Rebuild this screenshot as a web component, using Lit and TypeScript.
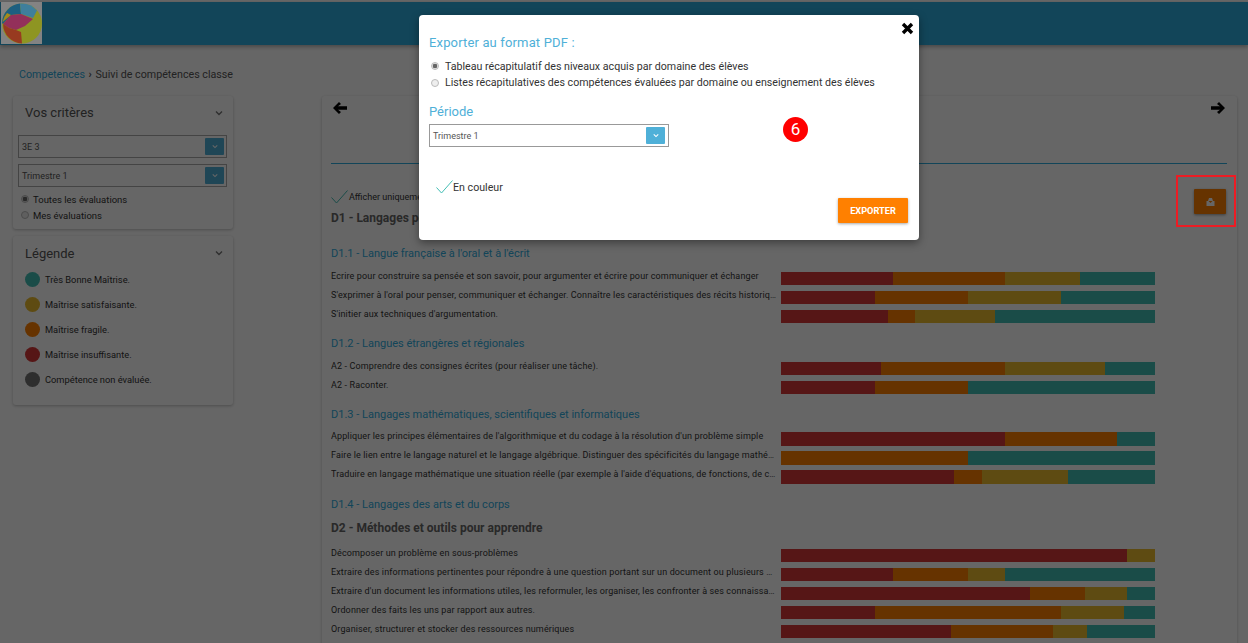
import { html, css, LitElement } from 'lit';
import { customElement } from 'lit/decorators.js';

const COLORS = ['#d73737', '#ff8000', '#ebbc2d', '#43beb4'];

interface Row {
  label: string;
  seg: number[];
}

interface Group {
  title: string;
  rows: Row[];
  tall?: boolean;
  cls: string;
}

const GROUPS: Group[] = [
  {
    title: 'D1.1 - Langue française à l\'oral et à l\'écrit',
    cls: 'g11',
    rows: [
      { label: 'Écrire pour construire sa pensée et son savoir, pour argumenter et écrire pour communiquer et échanger', seg: [112, 112, 75, 75] },
      { label: 'S\'exprimer à l\'oral pour penser, communiquer et échanger. Connaître les caractéristiques des récits historiques et leurs enjeux', seg: [94, 93, 93, 94] },
      { label: 'S\'initier aux techniques d\'argumentation.', seg: [107, 27, 80, 160] },
    ],
  },
  {
    title: 'D1.2 - Langues étrangères et régionales',
    cls: 'g12',
    rows: [
      { label: 'A2 - Comprendre des consignes écrites (pour réaliser une tâche).', seg: [100, 124, 100, 50] },
      { label: 'A2 - Raconter.', seg: [94, 93, 0, 187] },
    ],
  },
  {
    title: 'D1.3 - Langages mathématiques, scientifiques et informatiques',
    cls: 'g13',
    tall: true,
    rows: [
      { label: 'Appliquer les principes élémentaires de l\'algorithmique et du codage à la résolution d\'un problème simple', seg: [224, 112, 0, 38] },
      { label: 'Faire le lien entre le langage naturel et le langage algébrique. Distinguer des spécificités du langage mathématique', seg: [0, 187, 0, 187] },
      { label: 'Traduire en langage mathématique une situation réelle (par exemple à l\'aide d\'équations, de fonctions, de configurations)', seg: [173, 28, 86, 87] },
    ],
  },
  { title: 'D1.4 - Langages des arts et du corps', cls: 'g14', rows: [] },
];

const D2_ROWS: Row[] = [
  { label: 'Décomposer un problème en sous-problèmes', seg: [346, 0, 28, 0] },
  { label: 'Extraire des informations pertinentes pour répondre à une question portant sur un document ou plusieurs documents', seg: [112, 75, 37, 150] },
  { label: 'Extraire d\'un document les informations utiles, les reformuler, les organiser, les confronter à ses connaissances', seg: [249, 55, 42, 28] },
  { label: 'Ordonner des faits les uns par rapport aux autres.', seg: [94, 186, 63, 31] },
  { label: 'Organiser, structurer et stocker des ressources numériques', seg: [170, 102, 34, 68] },
];

const LEGEND = [
  ['Très Bonne Maîtrise.', COLORS[3]],
  ['Maîtrise satisfaisante.', COLORS[2]],
  ['Maîtrise fragile.', COLORS[1]],
  ['Maîtrise insuffisante.', COLORS[0]],
  ['Compétence non évaluée.', '#737373'],
];

const chevron = html`<svg class="chev" width="8" height="6" viewBox="0 0 8 6"><path d="M1 1.5 4 4.5 7 1.5" fill="none" stroke="currentColor" stroke-width="1.4"/></svg>`;
const check = html`<svg class="check" width="17" height="14" viewBox="0 0 17 14"><path d="M0.5 7.5 5.5 13 16.5 0.5" fill="none" stroke="currentColor" stroke-width="1"/></svg>`;

@customElement('app-root')
export class AppRoot extends LitElement {
  static styles = css`
    :host {
      display: block;
      position: relative;
      width: 1248px;
      height: 643px;
      overflow: hidden;
      background: #fff;
      font-family: Roboto, 'Liberation Sans', sans-serif;
      color: #222;
    }

    .header {
      height: 43px;
      margin-top: 2px;
      background: #2facde;
      box-shadow: 0 2px 4px rgba(0, 0, 0, 0.3);
    }

    .logo {
      position: absolute;
      left: 1px;
      top: 2px;
      z-index: 20;
      width: 41px;
      height: 42px;
      display: block;
    }

    .crumb {
      margin: 23px 0 0 19px;
      height: 14px;
      line-height: 14px;
      font-size: 10.7px;
      color: #555;
    }

    .crumb a {
      color: #2facde;
    }

    .crumb b {
      margin: 0 1px;
    }

    .layout {
      display: flex;
      align-items: flex-start;
      margin-top: 14px;
    }

    .side {
      width: 220px;
      margin-left: 13px;
      display: flex;
      flex-direction: column;
      gap: 7px;
    }

    .card {
      background: #fff;
      border-radius: 3px;
      box-shadow: 0 1px 3px rgba(0, 0, 0, 0.25);
    }

    .side-head {
      display: flex;
      justify-content: space-between;
      align-items: center;
      padding: 0 10px 0 12px;
      height: 33px;
      font-size: 13px;
      color: #555;
    }

    .chev {
      color: #777;
    }

    .criteria {
      height: 133px;
    }

    .select {
      display: flex;
      align-items: center;
      justify-content: space-between;
      box-sizing: border-box;
      border: 1px solid #aaa;
      height: 23px;
      font-size: 9px;
      color: #555;
      padding: 0 2px 0 3px;
    }

    .select .btn {
      width: 19px;
      height: 17px;
      background: #4fb0d8;
      border-radius: 1px;
      display: flex;
      align-items: center;
      justify-content: center;
    }

    .select .chev {
      color: #fff;
      width: 6px;
      height: 5px;
    }

    .criteria .select {
      margin: 6px 6px 6px 5px;
    }

    .criteria .select + .select {
      margin-top: 0;
      margin-bottom: 4px;
    }

    .radio {
      display: flex;
      align-items: center;
      gap: 4px;
      font-size: 9.5px;
      height: 16px;
      color: #333;
      margin-left: 8px;
    }

    .dot {
      width: 8px;
      height: 8px;
      border: 1px solid #bbb;
      border-radius: 50%;
      box-sizing: border-box;
      background: #eee;
      flex: none;
    }

    .dot.on {
      background: radial-gradient(circle, #666 0 2px, #e4e4e4 2.6px);
    }

    .legend {
      height: 169px;
    }

    .legend .side-head {
      box-sizing: border-box;
      height: 36px;
      padding-bottom: 2px;
    }

    .leg-row {
      display: flex;
      align-items: center;
      gap: 5px;
      height: 15px;
      margin: 0 0 10px 12px;
      font-size: 9.3px;
      color: #333;
    }

    .leg-row i {
      width: 15px;
      height: 15px;
      border-radius: 50%;
    }

    .main {
      position: relative;
      margin-left: 89px;
      width: 915px;
      height: 560px;
      box-sizing: border-box;
      padding-left: 9px;
    }

    .nav {
      display: flex;
      justify-content: space-between;
      padding: 6px 2px 0 2px;
      height: 68px;
      box-sizing: border-box;
      border-bottom: 1px solid #2facde;
      width: 896px;
    }

    .only {
      display: flex;
      align-items: center;
      gap: 1px;
      margin-top: 26px;
      height: 14px;
      font-size: 9px;
      color: #333;
      white-space: nowrap;
    }

    .only .check,
    .modal .check {
      color: #43beb4;
    }

    h2 {
      margin: 6px 0 0;
      font-size: 12px;
      line-height: 16px;
      height: 16px;
      font-weight: 700;
      color: #666;
      white-space: nowrap;
    }

    h3 {
      margin: 0;
      font-size: 11px;
      line-height: 14px;
      font-weight: 400;
      color: #2facde;
      white-space: nowrap;
    }

    .group h3 + .rows {
      margin-top: 11px;
    }

    .g11 { margin-top: 21px; }
    .g12 { margin-top: 14px; }
    .g13 { margin-top: 14px; }
    .g14 { margin-top: 14px; }

    .g13 h3 + .rows {
      margin-top: 10px;
    }

    .d2 {
      margin-top: 8px;
    }

    .d2 + .rows {
      margin-top: 13px;
    }

    .row {
      display: flex;
      height: 13px;
      margin-bottom: 6px;
      width: 824px;
    }

    .tall .row {
      height: 14px;
      margin-bottom: 5px;
    }

    .label {
      width: 450px;
      flex: none;
      font-size: 9px;
      line-height: 9px;
      color: #333;
      white-space: nowrap;
      overflow: hidden;
      text-overflow: ellipsis;
      box-sizing: border-box;
      padding-right: 4px;
      letter-spacing: 0.13px;
    }

    .bar {
      flex: 1;
      display: flex;
    }

    .export {
      position: absolute;
      right: 11px;
      top: 93px;
      width: 32px;
      height: 25px;
      background: #ff8000;
      border-radius: 1px;
      box-shadow: 0 1px 3px rgba(0, 0, 0, 0.4);
      display: flex;
      align-items: center;
      justify-content: center;
    }

    .overlay {
      position: absolute;
      inset: 0;
      z-index: 10;
      background: rgba(0, 0, 0, 0.6);
    }

    .logo-bg {
      fill: #838383;
    }

    .modal {
      position: absolute;
      z-index: 11;
      left: 419px;
      top: 15px;
      width: 500px;
      height: 225px;
      box-sizing: border-box;
      padding: 20px 10px 0;
      background: #fff;
      border-radius: 4px;
      box-shadow: 0 3px 8px rgba(0, 0, 0, 0.4);
    }

    .close {
      position: absolute;
      right: 5px;
      top: 7px;
    }

    .modal h4 {
      margin: 0;
      font-size: 13px;
      line-height: 16px;
      font-weight: 400;
      color: #4fb0d8;
      letter-spacing: 0.15px;
    }

    .modal .radios {
      margin-top: 7px;
    }

    .modal .radio {
      font-size: 10.65px;
      height: 16.5px;
      gap: 6px;
      margin-left: 2px;
      color: #333;
    }

    .modal .period {
      margin-top: 13px;
      font-size: 13px;
      line-height: 16px;
      color: #4fb0d8;
    }

    .modal .select {
      width: 240px;
      margin-top: 4px;
      border-color: #999;
      padding: 0 3px 0 3px;
    }

    .color {
      display: flex;
      align-items: center;
      gap: 0;
      margin: 32px 0 0 7px;
      font-size: 10.65px;
      color: #333;
      height: 16px;
    }

    .go {
      position: absolute;
      right: 11px;
      bottom: 17px;
      width: 70px;
      height: 25px;
      display: flex;
      align-items: center;
      justify-content: center;
      background: #ff8000;
      color: #fff;
      font-size: 9.2px;
      font-weight: 700;
      border-radius: 1px;
      box-shadow: 0 1px 3px rgba(0, 0, 0, 0.35);
    }

    .step {
      position: absolute;
      left: 364px;
      top: 102px;
      width: 25px;
      height: 25px;
      border-radius: 50%;
      background: #f00;
      color: #fff;
      font-size: 17px;
      line-height: 25px;
      text-align: center;
    }

    .mark {
      position: absolute;
      z-index: 12;
      left: 1176px;
      top: 175px;
      width: 60px;
      height: 52px;
      box-sizing: border-box;
      border: 2px solid #ed1c24;
    }
  `;

  private renderBar(seg: number[]) {
    return html`<div class="bar">
      ${seg.map((w, i) =>
        w > 0 ? html`<span style="width:${w}px;background:${COLORS[i]}"></span>` : ''
      )}
    </div>`;
  }

  private renderRows(rows: Row[], tall = false) {
    return html`<div class="rows ${tall ? 'tall' : ''}">
      ${rows.map(
        (r) => html`<div class="row"><div class="label">${r.label}</div>${this.renderBar(r.seg)}</div>`
      )}
    </div>`;
  }

  render() {
    return html`
      <svg class="logo" viewBox="0 0 41 42">
        <rect class="logo-bg" width="41" height="42"></rect>
        <circle cx="21" cy="21.5" r="20" fill="#8e9522"></circle>
        <path d="M1 21A20 20 0 0 1 19 1.6L20 12 10 13 2 22Z" fill="#1d5f80"></path>
        <path d="M19 1.6A20 20 0 0 1 36 8.5L32 16 20 12Z" fill="#3f7f9c"></path>
        <path d="M1.6 20 10 13 6 11A20 20 0 0 0 1.6 20Z" fill="#a58a18"></path>
        <path d="M2 22 10 13 20 12 32 17 24 24 15 28 8 26Z" fill="#93305a"></path>
        <path d="M2 22 8 26 15 28 20 30 21 41.5A20 20 0 0 1 2 22Z" fill="#983a20"></path>
      </svg>
      <div class="header"></div>
      <div class="crumb"><a>Competences</a> <b>›</b> Suivi de compétences classe</div>
      <div class="layout">
        <div class="side">
          <div class="card criteria">
            <div class="side-head">Vos critères ${chevron}</div>
            <div class="select">3E 3 <span class="btn">${chevron}</span></div>
            <div class="select">Trimestre 1 <span class="btn">${chevron}</span></div>
            <div class="radio"><span class="dot on"></span>Toutes les évaluations</div>
            <div class="radio"><span class="dot"></span>Mes évaluations</div>
          </div>
          <div class="card legend">
            <div class="side-head">Légende ${chevron}</div>
            ${LEGEND.map(
              ([t, c]) => html`<div class="leg-row"><i style="background:${c}"></i>${t}</div>`
            )}
          </div>
        </div>
        <div class="card main">
          <div class="nav">
            <svg width="14" height="12" viewBox="0 0 14 12"><path d="M0 6 6 0 8 2 5 4.2H14V7.8H5L8 10 6 12Z" fill="#000"></path></svg>
            <svg width="14" height="12" viewBox="0 0 14 12"><path d="M14 6 8 0 6 2 9 4.2H0V7.8H9L6 10 8 12Z" fill="#000"></path></svg>
          </div>
          <div class="only">${check}Afficher uniquement les compétences évaluées</div>
          <h2>D1 - Langages pour penser et communiquer</h2>
          ${GROUPS.map(
            (g) => html`<div class="group ${g.cls}">
              <h3>${g.title}</h3>
              ${g.rows.length ? this.renderRows(g.rows, g.tall) : ''}
            </div>`
          )}
          <h2 class="d2">D2 - Méthodes et outils pour apprendre</h2>
          ${this.renderRows(D2_ROWS)}
          <div class="export">
            <svg width="9" height="8" viewBox="0 0 9 8"><path d="M3 0H6L7 3H8.5V8H0.5V3H2ZM2.5 3 4.5 5 6.5 3Z" fill="#fff" fill-rule="evenodd"></path></svg>
          </div>
        </div>
      </div>
      <div class="overlay"></div>
      <div class="modal">
        <svg class="close" width="13" height="13" viewBox="0 0 13 13"><path d="M2 2 11 11M11 2 2 11" stroke="#000" stroke-width="3.4"></path></svg>
        <h4>Exporter au format PDF :</h4>
        <div class="radios">
          <div class="radio"><span class="dot on"></span>Tableau récapitulatif des niveaux acquis par domaine des élèves</div>
          <div class="radio"><span class="dot"></span>Listes récapitulatives des compétences évaluées par domaine ou enseignement des élèves</div>
        </div>
        <div class="period">Période</div>
        <div class="select">Trimestre 1 <span class="btn">${chevron}</span></div>
        <div class="color">${check}En couleur</div>
        <div class="step">6</div>
        <div class="go">EXPORTER</div>
      </div>
      <div class="mark"></div>
    `;
  }
}
